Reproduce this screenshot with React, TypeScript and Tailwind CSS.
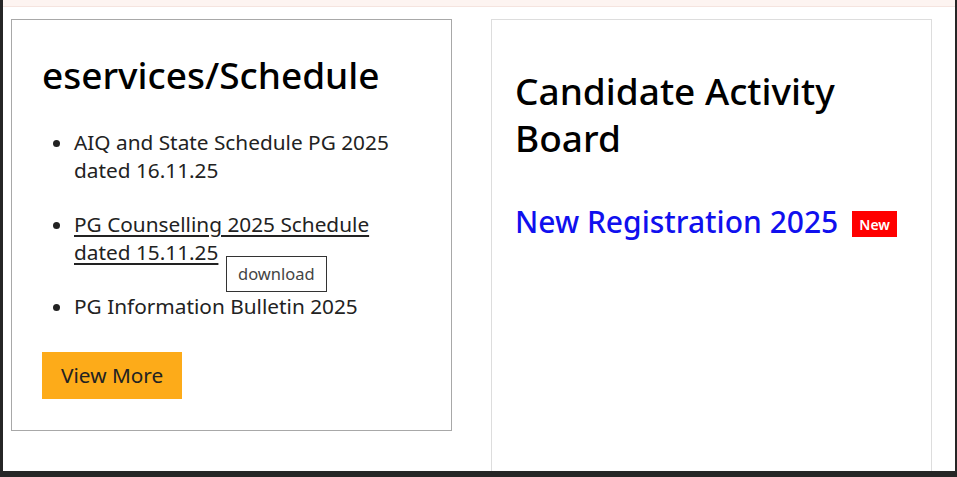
export default function App() {
  return (
    <div className="w-[957px] h-[477px] overflow-hidden bg-[#262626] pl-[3px] pr-[2px] pb-[6px] font-['Noto_Sans',sans-serif]">
      <div className="h-full bg-white flex flex-col">
        <div className="h-[7px] flex-none bg-[#fdf4f1] border-b border-[#f5e4df]" />
        <div className="flex-1 flex items-start gap-[39px] pl-[8px] pt-[12px] overflow-hidden">
          {/* left card */}
          <div className="relative w-[441px] h-[412px] flex-none border border-[#a8a8a8] pl-[30px] pr-[20px]">
            <h2 className="mt-[33px] text-[37px] leading-[44px] font-medium text-black">eservices/Schedule</h2>
            <ul className="mt-[31px] list-disc pl-[32px] text-[20.8px] leading-[28px] text-[#222]">
              <li className="pr-[30px]">AIQ and State Schedule PG 2025 dated 16.11.25</li>
              <li className="relative mt-[26px] pr-[30px]">
                <a className="underline underline-offset-[3px]">PG Counselling 2025 Schedule dated 15.11.25</a>
                <span className="absolute left-[152px] top-[46px] border border-[#333] bg-white px-[11px] h-[36px] flex items-center text-[16.5px] text-[#444]">
                  download
                </span>
              </li>
              <li className="mt-[26px]">PG Information Bulletin 2025</li>
            </ul>
            <button className="mt-[32px] h-[47px] px-[19px] bg-[#fdab19] text-[20.8px] text-[#222]">View More</button>
          </div>
          {/* right card */}
          <div className="w-[441px] h-[500px] flex-none border border-[#dddddd] pl-[23px] pr-[20px]">
            <h2 className="mt-[47px] text-[37px] leading-[47px] font-medium text-black">Candidate Activity Board</h2>
            <div className="mt-[43px] flex items-center gap-[14px]">
              <a className="text-[30px] leading-[36px] font-medium text-[#1010ee]">New Registration 2025</a>
              <span className="mt-[4px] h-[26px] px-[7px] flex items-center bg-[#ff0000] text-white text-[14px] font-semibold">New</span>
            </div>
          </div>
        </div>
      </div>
    </div>
  );
}
